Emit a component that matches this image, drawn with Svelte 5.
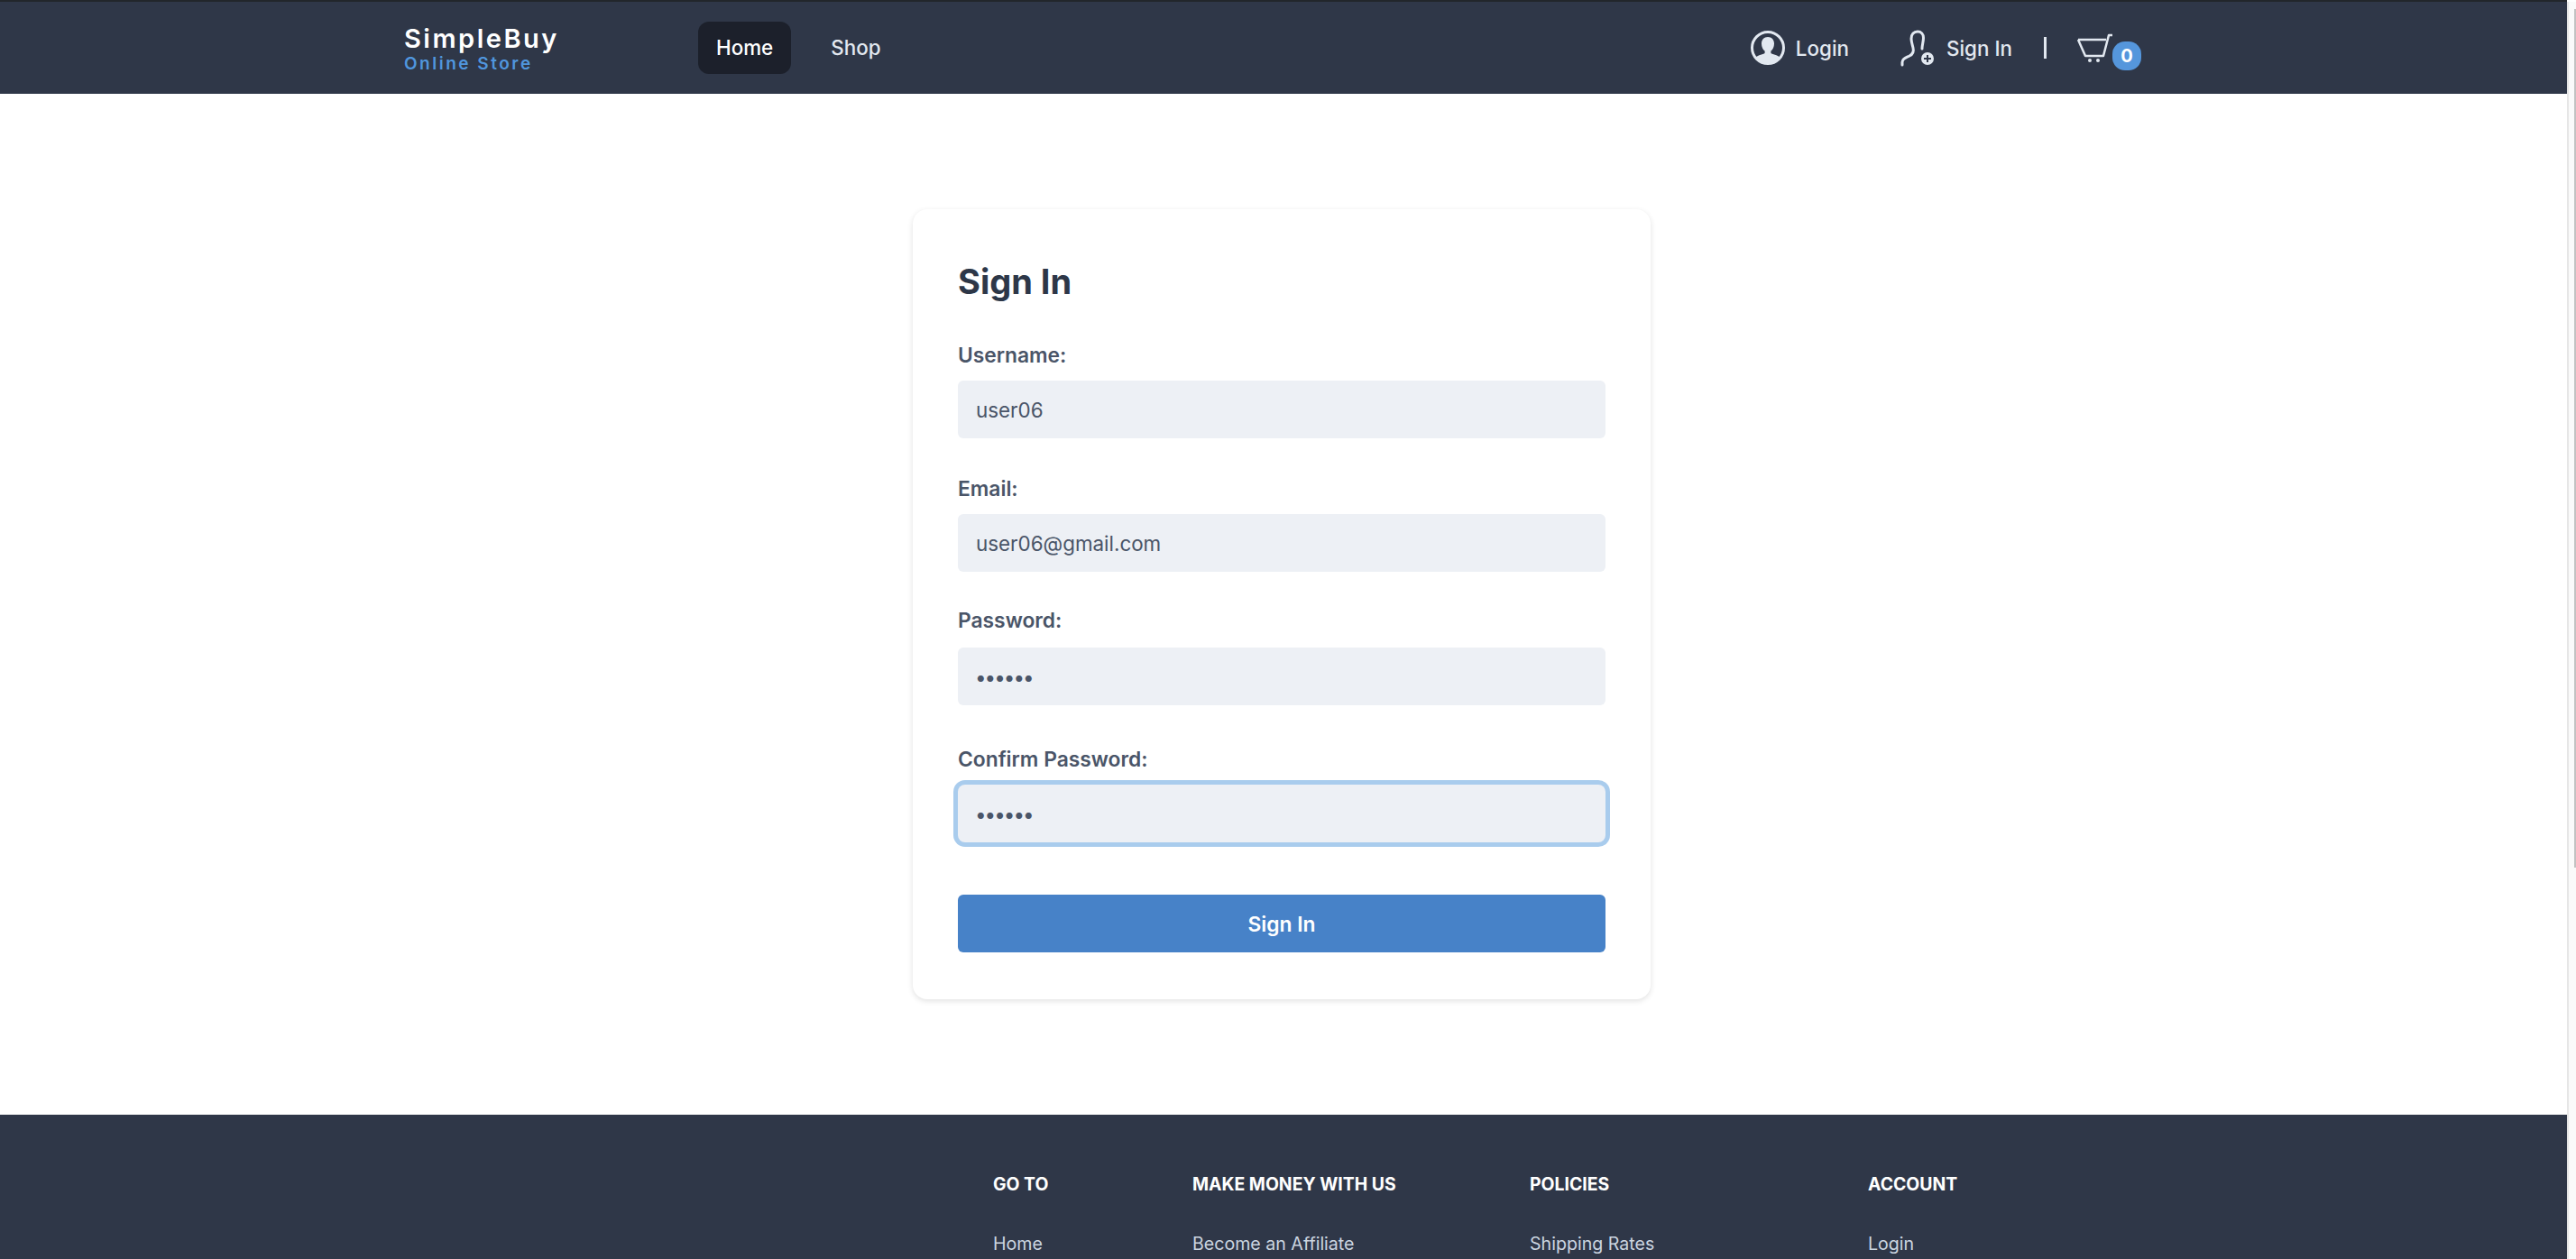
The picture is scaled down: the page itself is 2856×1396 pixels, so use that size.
<script>
    const fields = [
        { id: "username", label: "Username:", type: "text", value: "user06" },
        { id: "email", label: "Email:", type: "email", value: "user06@gmail.com" },
        { id: "password", label: "Password:", type: "password", value: "123456" },
        { id: "confirm", label: "Confirm Password:", type: "password", value: "123456" },
    ];

    const columns = [
        { title: "Go to", link: "Home" },
        { title: "Make money with us", link: "Become an Affiliate" },
        { title: "Policies", link: "Shipping Rates" },
        { title: "Account", link: "Login" },
    ];
</script>

<div class="page">
    <header class="header">
        <div class="bar">
            <a class="logo" href="#home">
                <span class="brand">SimpleBuy</span>
                <span class="tagline">Online Store</span>
            </a>
            <nav class="nav">
                <a class="nav-link active" href="#home">Home</a>
                <a class="nav-link" href="#shop">Shop</a>
            </nav>
            <div class="actions">
                <a class="action login" href="#login">
                    <svg width="40" height="40" viewBox="0 0 40 40" aria-hidden="true">
                        <defs>
                            <clipPath id="inner"><circle cx="20" cy="20" r="17" /></clipPath>
                        </defs>
                        <circle cx="20" cy="20" r="17.5" fill="none" stroke="#e2e8f0" stroke-width="3" />
                        <g clip-path="url(#inner)" fill="#e2e8f0">
                            <path d="M20 8c-4.4 0-7 3.2-7 7.4 0 3.4 1.500 6.400 3.600 8.200v2.400c-3.600 1.800-9.100 2.600-11 5.500v9h28.800v-9c-1.900-2.900-7.400-3.700-11-5.500v-2.400c2.100-1.800 3.600-4.800 3.600-8.200C27 11.200 24.400 8 20 8z" />
                        </g>
                    </svg>
                    <span>Login</span>
                </a>
                <a class="action signin" href="#signin">
                    <svg width="40" height="42" viewBox="0 0 40 42" aria-hidden="true">
                        <path d="M3 40v-3c0-4 4-5 8-7 4-2 5-5 4-9-1-4-2-7-2-10 0-5 3-8 7-8s6.500 3 6.500 7c0 4-1.500 8-1.500 12" fill="none" stroke="#e2e8f0" stroke-width="3" stroke-linecap="round" />
                        <circle cx="31" cy="33" r="7" fill="#e2e8f0" />
                        <path d="M31 29v8M27 33h8" stroke="#2f3748" stroke-width="2" />
                    </svg>
                    <span>Sign In</span>
                </a>
                <span class="divider"></span>
                <a class="cart" href="#cart">
                    <svg width="42" height="34" viewBox="0 0 42 34" aria-hidden="true">
                        <path d="M2 8h31M2 8l8 18h20l6-23h4" fill="none" stroke="#e2e8f0" stroke-width="2.500" stroke-linejoin="round" />
                        <circle cx="15" cy="31" r="2" fill="#e2e8f0" />
                        <circle cx="24" cy="31" r="2" fill="#e2e8f0" />
                    </svg>
                    <span class="badge">0</span>
                </a>
            </div>
        </div>
    </header>

    <main class="main">
        <form class="card" onsubmit={(e) => e.preventDefault()}>
            <h1>Sign In</h1>
            {#each fields as f}
                <label class="field {f.id}">
                    <span>{f.label}</span>
                    <input type={f.type} value={f.value} readonly />
                </label>
            {/each}
            <button type="submit">Sign In</button>
        </form>
    </main>

    <footer class="footer">
        <div class="columns">
            {#each columns as c}
                <div class="column">
                    <h2>{c.title}</h2>
                    <a href="#footer">{c.link}</a>
                </div>
            {/each}
        </div>
    </footer>

    <div class="scrollbar"><div class="thumb"></div></div>
</div>

<style>
    :global(body) {
        overflow: hidden;
        background: #fff;
    }

    .page {
        position: relative;
        width: 2856px;
        height: 1396px;
        overflow: hidden;
        font-family: Inter, "Liberation Sans", sans-serif;
        color: #2d3748;
    }

    a {
        color: inherit;
        text-decoration: none;
    }

    .header {
        width: 2846px;
        height: 104px;
        box-sizing: border-box;
        background: #2f3748;
        border-top: 2px solid #22262b;
    }

    .bar {
        display: flex;
        align-items: center;
        width: 1950px;
        height: 102px;
        margin: 0 auto;
        color: #e2e8f0;
    }

    .logo {
        display: flex;
        flex-direction: column;
        width: 326px;
        padding-top: 2px;
    }

    .brand {
        font-size: 29px;
        line-height: 32px;
        font-weight: 600;
        letter-spacing: 2.5px;
        color: #fff;
    }

    .tagline {
        margin-top: 2px;
        font-size: 19px;
        line-height: 20px;
        font-weight: 600;
        letter-spacing: 2.5px;
        color: #5096de;
    }

    .nav {
        display: flex;
        gap: 24px;
    }

    .nav-link {
        padding: 0 20px;
        height: 58px;
        line-height: 58px;
        border-radius: 12px;
        font-size: 22.4px;
        font-weight: 500;
    }

    .nav-link.active {
        background: #1c202b;
        color: #fff;
    }

    .actions {
        display: flex;
        align-items: center;
        margin-left: auto;
        padding-right: 24px;
        font-size: 22.4px;
        font-weight: 500;
    }

    .action {
        display: flex;
        align-items: center;
    }

    .login {
        gap: 11px;
        margin-right: 56px;
    }

    .signin {
        gap: 12px;
    }

    .divider {
        width: 3px;
        height: 24px;
        margin: 0 33px 0 35px;
        background: #e2e8f0;
    }

    .cart {
        display: flex;
        align-items: flex-start;
        margin-top: 8px;
    }

    .badge {
        width: 32px;
        height: 32px;
        margin-top: 10px;
        margin-left: -2px;
        border-radius: 14px;
        background: #5596dc;
        color: #fff;
        font-size: 20px;
        font-weight: 700;
        line-height: 32px;
        text-align: center;
    }

    .main {
        display: flex;
        justify-content: center;
        width: 2842px;
        height: 1132px;
        padding-top: 128px;
        box-sizing: border-box;
    }

    .card {
        width: 818px;
        height: 876px;
        box-sizing: border-box;
        padding: 0 50px;
        background: #fff;
        border-radius: 16px;
        box-shadow: 0 2px 6px rgba(0, 0, 0, 0.12);
    }

    h1 {
        margin: 0;
        padding-top: 54px;
        font-size: 38px;
        line-height: 52px;
        font-weight: 700;
        color: #2d3748;
    }

    .field {
        display: block;
        margin-top: 41px;
    }

    .field span {
        display: block;
        margin-bottom: 13px;
        font-size: 22.8px;
        line-height: 30px;
        font-weight: 600;
        color: #4a5568;
    }

    .password {
        margin-top: 39px;
    }

    .password span {
        margin-bottom: 15px;
    }

    .confirm {
        margin-top: 45px;
    }

    input {
        display: block;
        width: 100%;
        height: 64px;
        box-sizing: border-box;
        padding: 0 20px;
        border: 0;
        border-radius: 6px;
        outline: 0;
        background: #edf0f5;
        color: #4a5568;
        font-family: inherit;
        font-size: 22.4px;
    }

    input[type="password"] {
        padding-left: 19px;
        letter-spacing: -2px;
    }

    .confirm input {
        box-shadow: 0 0 0 5px #a9cced;
        border-radius: 8px;
    }

    button {
        display: block;
        width: 100%;
        height: 64px;
        margin-top: 58px;
        border: 0;
        border-radius: 6px;
        background: #4782c8;
        color: #fff;
        font-family: inherit;
        font-size: 22.8px;
        font-weight: 600;
    }

    .footer {
        width: 2846px;
        height: 160px;
        background: #2f3748;
    }

    .columns {
        display: grid;
        grid-template-columns: 221px 374px 375px 200px;
        padding: 64px 0 0 1101px;
    }

    h2 {
        margin: 0 0 40px;
        font-size: 19.4px;
        line-height: 26px;
        font-weight: 700;
        text-transform: uppercase;
        color: #fff;
    }

    .column a {
        font-size: 19.6px;
        line-height: 26px;
        color: #cbd5e0;
    }

    .scrollbar {
        position: absolute;
        top: 2px;
        right: 0;
        bottom: 0;
        width: 10px;
        background: #fafafa;
        border-left: 2px solid #e6e6e6;
        box-sizing: border-box;
    }

    .thumb {
        position: absolute;
        top: 8px;
        right: 0;
        width: 2px;
        height: 952px;
        background: #c2c2c2;
    }
</style>
